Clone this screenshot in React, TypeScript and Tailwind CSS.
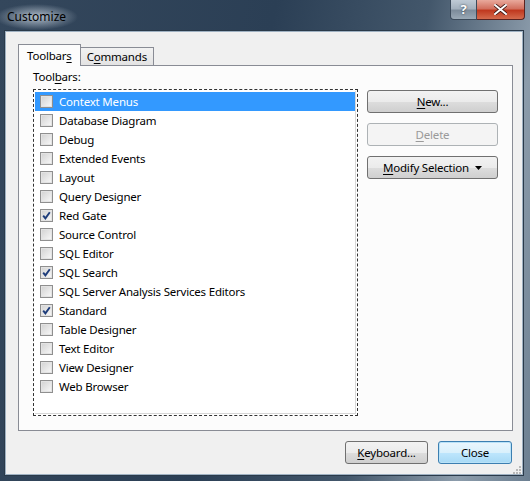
import React from 'react';

const font = { fontFamily: '"Segoe UI", "Noto Sans", sans-serif' };

const toolbars = [
  { name: 'Context Menus', checked: false },
  { name: 'Database Diagram', checked: false },
  { name: 'Debug', checked: false },
  { name: 'Extended Events', checked: false },
  { name: 'Layout', checked: false },
  { name: 'Query Designer', checked: false },
  { name: 'Red Gate', checked: true },
  { name: 'Source Control', checked: false },
  { name: 'SQL Editor', checked: false },
  { name: 'SQL Search', checked: true },
  { name: 'SQL Server Analysis Services Editors', checked: false },
  { name: 'Standard', checked: true },
  { name: 'Table Designer', checked: false },
  { name: 'Text Editor', checked: false },
  { name: 'View Designer', checked: false },
  { name: 'Web Browser', checked: false },
];

// underlines the access key letter, the way Windows labels do
function Key({ children }: { children: string }) {
  return <span className="underline underline-offset-2 decoration-1">{children}</span>;
}

function CheckBox({ checked }: { checked: boolean }) {
  return (
    <span className="flex h-[13px] w-[13px] shrink-0 items-center justify-center border border-[#8f8f8f] bg-white">
      <span className="flex h-[11px] w-[11px] items-center justify-center border border-[#e3e3e3] bg-gradient-to-br from-[#d5d5d5] to-[#f6f6f6]">
        {checked && (
          <svg width="9" height="9" viewBox="0 0 9 9">
            <path d="M1.2 4.6 L3.4 7.4 L7.8 1.2" fill="none" stroke="#1e3d7b" strokeWidth="1.9" />
          </svg>
        )}
      </span>
    </span>
  );
}

function Button({
  children,
  className = '',
  disabled = false,
  focused = false,
}: {
  children: React.ReactNode;
  className?: string;
  disabled?: boolean;
  focused?: boolean;
}) {
  let look =
    'border-[#707070] bg-[linear-gradient(#f2f2f2_0%,#ebebeb_50%,#dddddd_51%,#cfcfcf_100%)] text-black';
  if (disabled) look = 'border-[#adb2b5] bg-[#f4f4f4] text-[#9a9a9a]';
  if (focused)
    look =
      'border-[#3c7fb1] bg-[linear-gradient(#eaf6fd_0%,#d9f0fc_50%,#bee6fd_51%,#a7d9f5_100%)] text-black shadow-[inset_0_0_0_1px_#b9e2f8]';
  return (
    <div
      className={`flex h-[23px] items-center justify-center rounded-[3px] border text-[11.5px] tracking-[-0.2px] ${look} ${className}`}
    >
      <span className="rounded-[2px] px-1">{children}</span>
    </div>
  );
}

export default function App() {
  return (
    <div
      className="relative flex h-[481px] w-[530px] flex-col overflow-hidden bg-[linear-gradient(100deg,#34475c_0%,#2b3f55_45%,#43576b_70%,#8c9cab_88%,#6c7f91_100%)]"
      style={font}
    >
      {/* title bar */}
      <div className="relative flex h-[31px] shrink-0 items-center pl-[7px]">
        <span className="-ml-3 mt-[2px] rounded-full bg-[radial-gradient(closest-side,rgba(220,230,240,0.75),rgba(220,230,240,0))] px-3 py-1 text-[12px] text-black">
          Customize
        </span>
        <div className="absolute right-[5px] top-0 flex">
          <div className="flex h-[20px] w-[27px] items-center justify-center rounded-bl-[4px] border border-t-0 border-[#3b4a5a] bg-[linear-gradient(#bfcad5_0%,#a4b1be_45%,#7d8c9b_55%,#9aa9b6_100%)] text-[13px] font-bold text-white [text-shadow:0_0_2px_#1f2d3b]">
            ?
          </div>
          <div className="flex h-[20px] w-[48px] items-center justify-center rounded-br-[4px] border border-l-0 border-t-0 border-[#5a2320] bg-[linear-gradient(#e9a99c_0%,#d2705f_45%,#c0391f_55%,#d46b4d_100%)]">
            <svg width="13" height="11" viewBox="0 0 13 11">
              <path
                d="M1 1 L12 10 M12 1 L1 10"
                stroke="#3b1410"
                strokeWidth="3.6"
                strokeLinecap="round"
              />
              <path d="M1 1 L12 10 M12 1 L1 10" stroke="#fff" strokeWidth="2" strokeLinecap="round" />
            </svg>
          </div>
        </div>
      </div>

      {/* client area */}
      <div className="mx-[5px] mr-[7px] flex h-[444px] flex-col border border-[#9fb1c2] bg-[#f0f0f0] shadow-[0_0_0_1px_#2a3a4a]">
        <div className="px-[12px] pt-[12px]">
          {/* tabs */}
          <div className="flex h-[21px] items-end text-[11.5px] tracking-[-0.2px]">
            <div className="relative z-10 -mb-px flex h-[22px] items-center border border-b-0 border-[#898c95] bg-[#fcfcfc] px-[8px] text-black">
              Toolbar<Key>s</Key>
            </div>
            <div className="flex h-[18px] items-center border border-b-0 border-l-0 border-[#898c95] bg-[linear-gradient(#f2f2f2,#e3e3e3)] px-[6px] text-black">
              C<Key>o</Key>mmands
            </div>
          </div>

          {/* tab page */}
          <div className="flex h-[366px] w-[495px] border border-[#898c95] bg-[#fcfcfc] pl-[14px] pt-[3px] text-[11.5px] tracking-[-0.2px]">
            <div className="flex flex-col">
              <div className="mb-[4px] h-[16px] leading-[16px] text-black">
                Tool<Key>b</Key>ars:
              </div>
              <div className="h-[327px] w-[325px] border border-dashed border-[#333] bg-white p-px">
                <div className="h-full border border-l-0 border-t-0 border-[#d7d7d7] pt-px">
                  {toolbars.map((t, i) => (
                    <div
                      key={t.name}
                      className={`flex h-[19px] items-center gap-[6px] pl-[5px] ${
                        i === 0 ? 'bg-[#3399ff] text-white' : 'text-black'
                      }`}
                    >
                      <CheckBox checked={t.checked} />
                      <span>{t.name}</span>
                    </div>
                  ))}
                </div>
              </div>
            </div>

            <div className="ml-[9px] mt-[21px] flex w-[131px] flex-col gap-[10px]">
              <Button>
                <Key>N</Key>ew...
              </Button>
              <Button disabled>
                <Key>D</Key>elete
              </Button>
              <Button>
                <span className="flex items-center gap-[6px]">
                  <span>
                    <Key>M</Key>odify Selection
                  </span>
                  <svg width="7" height="4" viewBox="0 0 7 4">
                    <path d="M0 0 H7 L3.5 4 Z" fill="#000" />
                  </svg>
                </span>
              </Button>
            </div>
          </div>
        </div>

        {/* dialog buttons */}
        <div className="mt-[10px] flex justify-end gap-[10px] pr-[10px]">
          <Button className="w-[83px]">
            <Key>K</Key>eyboard...
          </Button>
          <Button className="w-[74px]" focused>
            Close
          </Button>
        </div>

        {/* size grip */}
        <div className="mt-auto flex justify-end pb-px pr-px">
          <svg width="10" height="10" viewBox="0 0 10 10">
            {[
              [8, 2],
              [8, 5],
              [5, 5],
              [8, 8],
              [5, 8],
              [2, 8],
            ].map(([x, y]) => (
              <rect key={`${x}-${y}`} x={x} y={y} width="2" height="2" fill="#b8b8b8" />
            ))}
          </svg>
        </div>
      </div>
    </div>
  );
}
